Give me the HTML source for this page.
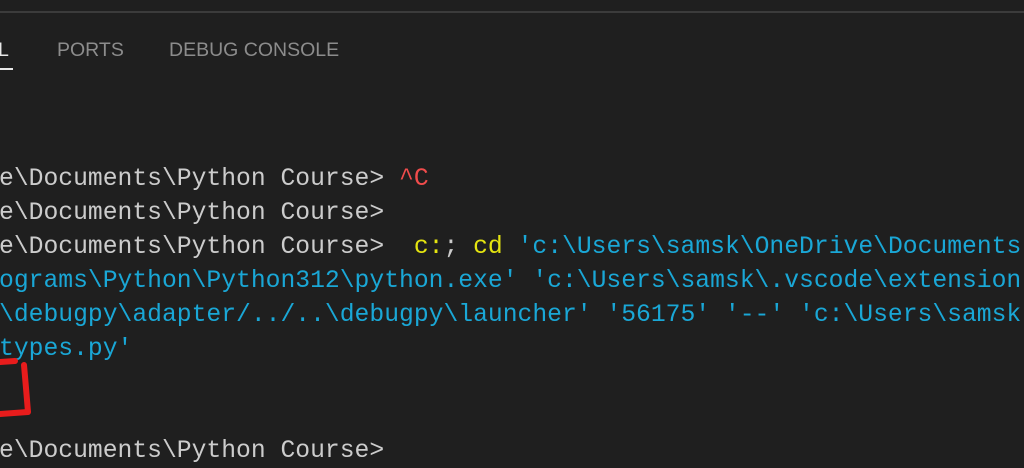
<!DOCTYPE html>
<html><head><style>
html,body{margin:0;padding:0;background:#1f1f1f;width:1024px;height:468px;overflow:hidden;position:relative}
.sep{position:absolute;left:0;top:11px;width:1024px;height:2px;background:#3b3b3b}
.tab{position:absolute;top:37px;font:19.5px "Liberation Sans",sans-serif;color:#8c8c8c;line-height:26px}
.term{position:absolute;left:-1px;top:162px;font:24.7px "Liberation Mono",monospace;line-height:34px;color:#cccccc;white-space:pre}
.r{color:#f14c4c}.y{color:#e5e510}.c{color:#1aa7d6}
</style></head><body>
<div class="sep"></div>
<div class="tab" style="left:-2px;color:#e7e7e7">L</div>
<div style="position:absolute;left:0;top:68px;width:13px;height:2px;background:#e7e7e7"></div>
<div class="tab" style="left:57px">PORTS</div>
<div class="tab" style="left:169px">DEBUG CONSOLE</div>
<div class="term">e\Documents\Python Course&gt; <span class="r">^C</span>
e\Documents\Python Course&gt;
e\Documents\Python Course&gt;  <span class="y">c:</span>; <span class="y">cd</span> <span class="c">'c:\Users\samsk\OneDrive\Documents</span>
<span class="c">ograms\Python\Python312\python.exe' 'c:\Users\samsk\.vscode\extension</span>
<span class="c">\debugpy\adapter/../..\debugpy\launcher' '56175' '--' 'c:\Users\samsk</span>
<span class="c">types.py'</span>


e\Documents\Python Course&gt;</div>
<svg style="position:absolute;left:0;top:0" width="1024" height="468"><path d="M0 362 L15 361 M24 365 L26 388 L28 412 L0 414" stroke="#e81c1c" stroke-width="6" fill="none" stroke-linecap="round" stroke-linejoin="round"/></svg>
</body></html>
